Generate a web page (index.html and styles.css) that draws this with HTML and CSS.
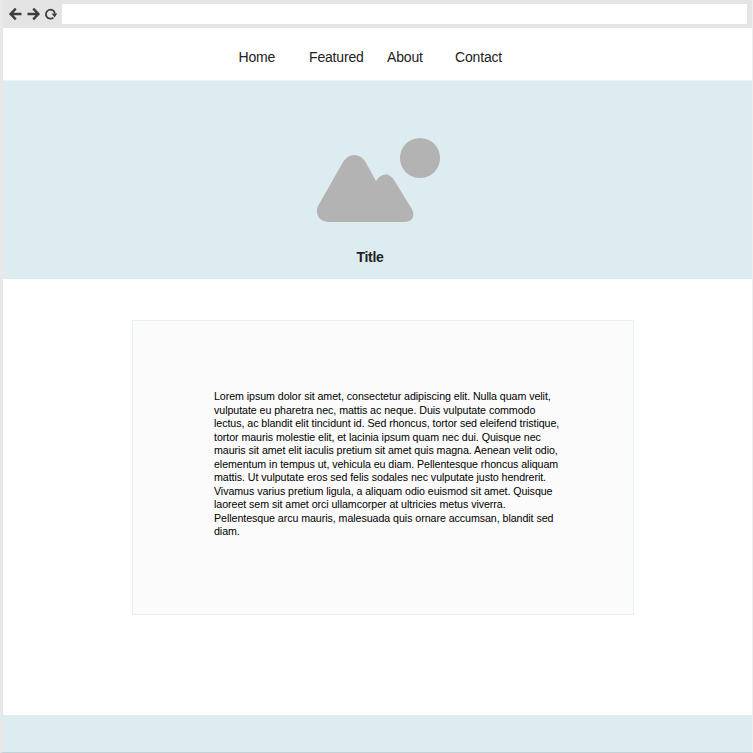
FILE: index.html
```
<!DOCTYPE html>
<html lang="en">
<head>
<meta charset="utf-8">
<title>Title</title>
<link rel="stylesheet" href="styles.css">
</head>
<body>
<div class="window">
  <header class="toolbar">
    <svg class="controls" width="62" height="28" viewBox="0 0 62 28" fill="none" stroke="#3c3c3c" stroke-width="2.4">
      <path d="M21.500 14H11M15.800 8.700L10.600 14l5.200 5.300"/>
      <path d="M27.500 14H38M33.200 8.700l5.200 5.300-5.200 5.300"/>
      <path stroke-width="1.7" d="M53.400 17.600A4.500 4.500 0 1 1 54.900 13.500"/>
      <path stroke="none" fill="#3c3c3c" d="M51.600 13.600h5.600l-2.600 3.800z"/>
    </svg>
    <div class="address"></div>
  </header>
  <nav class="nav">
    <a class="home">Home</a><a class="featured">Featured</a><a class="about">About</a><a class="contact">Contact</a>
  </nav>
  <section class="hero">
    <svg class="picture" width="124" height="86" viewBox="316 137 124 86" fill="#b3b3b3">
      <circle cx="420" cy="158" r="20"/>
      <path d="M318 206L342.500 163Q347 155 354.500 155Q361 155 365.500 162L376 181Q380 174.500 385.500 174.500Q390.500 174.500 394 180L411.500 208.500Q415 215 412 219Q409.500 222 404 222H330Q321.500 222 318.500 217Q315.500 212 318 206Z"/>
    </svg>
    <h1 class="title">Title</h1>
  </section>
  <main class="content">
    <article class="card">
      <p class="text">Lorem ipsum dolor sit amet, consectetur adipiscing elit. Nulla quam velit,<br>vulputate eu pharetra nec, mattis ac neque. Duis vulputate commodo<br>lectus, ac blandit elit tincidunt id. Sed rhoncus, tortor sed eleifend tristique,<br>tortor mauris molestie elit, et lacinia ipsum quam nec dui. Quisque nec<br>mauris sit amet elit iaculis pretium sit amet quis magna. Aenean velit odio,<br>elementum in tempus ut, vehicula eu diam. Pellentesque rhoncus aliquam<br>mattis. Ut vulputate eros sed felis sodales nec vulputate justo hendrerit.<br>Vivamus varius pretium ligula, a aliquam odio euismod sit amet. Quisque<br>laoreet sem sit amet orci ullamcorper at ultricies metus viverra.<br>Pellentesque arcu mauris, malesuada quis ornare accumsan, blandit sed<br>diam.</p>
    </article>
  </main>
  <footer class="footer"></footer>
</div>
</body>
</html>
```
FILE: styles.css
```
* { box-sizing: border-box; }
body {
  margin: 0;
  background: #fff;
  font-family: "Liberation Sans", Arial, sans-serif;
}
.window {
  display: flex;
  flex-direction: column;
  height: 753px;
  border-left: 3px solid #e8e8e8;
  border-right: 1px solid #eee;
  border-bottom: 1px solid #c3d2d7;
  overflow: hidden;
}
.toolbar {
  display: flex;
  flex: none;
  height: 28px;
  margin-left: -3px;
  margin-right: -1px;
  padding: 4px 6px 4px 0;
  background: #e4e4e4;
}
.controls { flex: none; margin-top: -4px; }
.address { flex: 1; background: #fff; }
.nav {
  display: flex;
  flex: none;
  height: 53px;
  padding: 21px 0 0 235.500px;
  font-size: 14px;
  line-height: 16px;
  letter-spacing: -0.170px;
  color: #222;
  border-bottom: 1px solid #e9f2f5;
}
.home { width: 70.500px; }
.featured { width: 78px; }
.about { width: 68px; }
.hero {
  flex: none;
  height: 198px;
  padding-top: 56px;
  background: #ddecf1;
}
.picture { display: block; margin-left: 313px; }
.title {
  margin: 25px 0 0 353.500px;
  font-size: 14px;
  line-height: 18px;
  letter-spacing: -0.300px;
  color: #222;
}
.content { flex: 1; padding: 41px 0 0 129px; }
.card {
  width: 502px;
  height: 295px;
  padding: 69px 0 0 81px;
  background: #fbfbfb;
  border: 1px solid #e5f0f2;
}
.text {
  margin: 0;
  font-size: 10.670px;
  line-height: 13.500px;
  letter-spacing: -0.060px;
  white-space: nowrap;
  color: #000;
}
.footer { flex: none; height: 37px; background: #ddecf1; }
```
